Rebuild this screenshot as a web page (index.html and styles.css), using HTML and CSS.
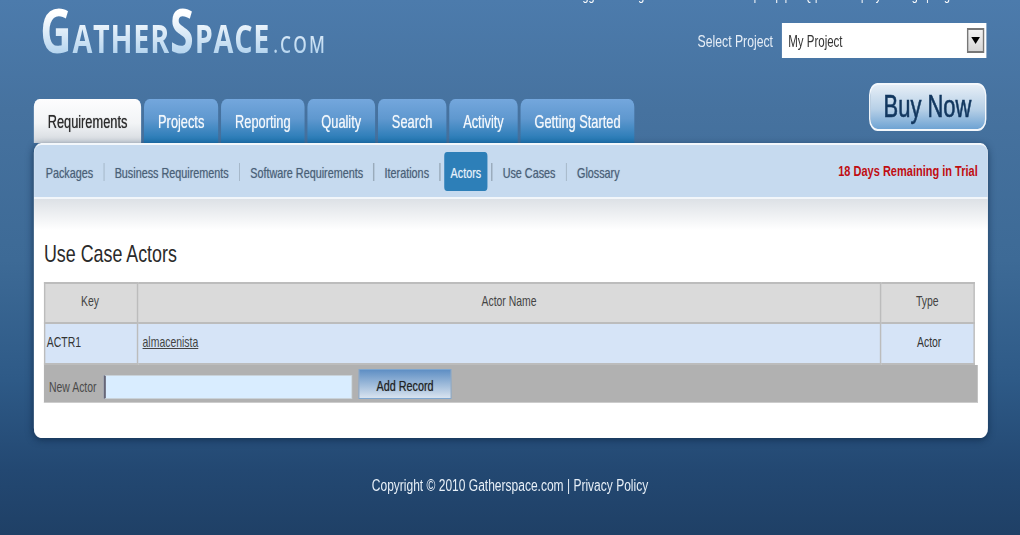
FILE: index.html
```html
<!DOCTYPE html>
<html lang="en">
<head>
<meta charset="utf-8">
<title>GatherSpace - Use Case Actors</title>
<link rel="stylesheet" href="styles.css">
</head>
<body>
<div class="page">
  <div class="toplinks">Logged in as: guest &nbsp; Welcome Guest | Help | FAQ | Contact | My Settings | Log Out</div>
  <header class="brand-row">
    <div class="logo"><span class="cap">G</span>ATHER<span class="cap">S</span>PACE<span class="dotcom">.COM</span></div>
    <div class="project">
      <span class="project-label">Select Project</span>
      <div class="select">
        <span>My Project</span>
        <span class="select-btn"><i class="select-arrow"></i></span>
      </div>
    </div>
  </header>
  <div class="nav-row">
    <nav class="tabs">
      <a class="tab active">Requirements</a>
      <a class="tab">Projects</a>
      <a class="tab">Reporting</a>
      <a class="tab">Quality</a>
      <a class="tab">Search</a>
      <a class="tab">Activity</a>
      <a class="tab">Getting Started</a>
    </nav>
    <a class="buy">Buy Now</a>
  </div>
  <section class="card">
    <div class="subnav">
      <div class="sublinks">
        <a class="sub">Packages</a><i class="sep"></i>
        <a class="sub">Business Requirements</a><i class="sep"></i>
        <a class="sub">Software Requirements</a><i class="sep"></i>
        <a class="sub">Iterations</a><i class="sep"></i>
        <a class="sub current">Actors</a><i class="sep"></i>
        <a class="sub">Use Cases</a><i class="sep"></i>
        <a class="sub">Glossary</a>
      </div>
      <div class="trial">18 Days Remaining in Trial</div>
    </div>
    <div class="content">
      <h1 class="title">Use Case Actors</h1>
      <table class="grid">
        <thead>
          <tr><th class="col-key">Key</th><th>Actor Name</th><th class="col-type">Type</th></tr>
        </thead>
        <tbody>
          <tr><td>ACTR1</td><td><a class="actor-link">almacenista</a></td><td class="center">Actor</td></tr>
        </tbody>
      </table>
      <div class="addbar">
        <label class="add-label">New Actor</label>
        <div class="add-input"></div>
        <button class="add-btn">Add Record</button>
      </div>
    </div>
  </section>
  <footer class="footer">Copyright © 2010 Gatherspace.com | Privacy Policy</footer>
</div>
</body>
</html>
```

FILE: styles.css
```css
html, body {
  margin: 0;
  height: 100%;
  overflow: hidden;
}
body {
  background: linear-gradient(#4c7bac 0, #46729f 110px, #3d6a96 260px, #2e5a87 380px, #234872 470px, #1f4066 535px);
  font-family: "Liberation Sans", Arial, sans-serif;
  font-size: 15px;
  color: #333;
}
.page {
  display: flex;
  flex-direction: column;
  width: 1416.67px;
  height: 535px;
  transform: scaleX(0.72);
  transform-origin: 0 0;
}
.toplinks {
  flex: none;
  height: 18px;
  margin-top: -14px;
  padding-right: 69px;
  line-height: 18px;
  text-align: right;
  color: #fff;
  font-size: 15px;
}
.brand-row {
  flex: none;
  height: 79px;
  display: flex;
  justify-content: space-between;
  align-items: flex-start;
  padding: 0 47px 0 56px;
}
.logo {
  height: 66px;
  line-height: 66px;
  margin-top: -7px;
  font-family: "Open Sans", sans-serif;
  font-weight: 700;
  font-size: 40px;
  letter-spacing: 1.1px;
  background: linear-gradient(#fff 25%, #b6d5ef 85%);
  -webkit-background-clip: text;
  background-clip: text;
  color: transparent;
  white-space: nowrap;
}
.cap { font-size: 60px; }
.dotcom { font-size: 24px; letter-spacing: 3px; margin-left: 4px; font-weight: 600; }
.project {
  display: flex;
  align-items: center;
  gap: 12px;
  margin-top: 19px;
}
.project-label {
  font-size: 17px;
  color: #e6eef7;
  padding-top: 2px;
}
.select {
  width: 284px;
  height: 35px;
  box-sizing: border-box;
  display: flex;
  align-items: center;
  justify-content: space-between;
  padding: 0 3px 0 9px;
  background: #fff;
  font-size: 16px;
  color: #333;
}
.select > span:first-child { padding-top: 2px; }
.select-btn {
  display: flex;
  align-items: center;
  justify-content: center;
  width: 24px;
  height: 25px;
  box-sizing: border-box;
  border: 2px solid #777;
  background: linear-gradient(#f2f2f2, #d6d6d6);
}
.select-arrow {
  width: 0;
  height: 0;
  border-left: 6px solid transparent;
  border-right: 6px solid transparent;
  border-top: 7px solid #000;
}
.nav-row {
  flex: none;
  height: 60px;
  display: flex;
  justify-content: space-between;
  align-items: flex-end;
  padding: 0 47px;
}
.tabs {
  display: flex;
  gap: 4.3px;
}
.tab {
  height: 44px;
  padding: 0 19.2px;
  line-height: 47px;
  font-size: 17.8px;
  color: #f2f7fc;
  border-radius: 8px 8px 0 0;
  background: linear-gradient(#74a7dd, #5f98cf 45%, #1f76b2);
  text-shadow: 0 0 1px rgba(255, 255, 255, .7);
  white-space: nowrap;
}
.tab.active {
  color: #2b2b2b;
  background: linear-gradient(#fdfdfe, #f2f4f6 55%, #d3d8de);
  text-shadow: 0 0 1px rgba(0, 0, 0, .6);
}
.buy {
  align-self: flex-start;
  width: 163px;
  height: 48px;
  box-sizing: border-box;
  border: 2px solid #f4f8fc;
  border-radius: 12px;
  background: linear-gradient(#e6eef6, #b7d0e7 55%, #6ea3d3);
  text-align: center;
  line-height: 43px;
  font-size: 30.5px;
  -webkit-text-stroke: 0.6px #12375f;
  color: #12375f;
}
.card {
  flex: none;
  width: 1325px;
  height: 295px;
  box-sizing: border-box;
  margin-left: 47px;
  border-top: 2px solid #f3f7fb;
  border-radius: 10px;
  background: #fff;
  box-shadow: 0 2px 9px rgba(10, 35, 65, .65);
  overflow: hidden;
}
.subnav {
  height: 52px;
  display: flex;
  align-items: center;
  justify-content: space-between;
  padding: 0 14px 0 8px;
  background: #c6daef;
  border-bottom: 2px solid #f2f6fa;
}
.sublinks {
  display: flex;
  align-items: center;
  gap: 5.7px;
}
.sub {
  padding: 0 8.5px;
  height: 39px;
  line-height: 42px;
  font-size: 15px;
  color: #4a6078;
  border-radius: 4px;
  white-space: nowrap;
  text-shadow: 0 0 1px rgba(74, 96, 120, .5);
}
.sub.current {
  background: #2d7fb8;
  color: #e8f2fa;
  text-shadow: 0 0 1px rgba(232, 242, 250, .5);
}
.sep {
  width: 1.5px;
  height: 18px;
  margin-top: 1px;
  background: #9aabbb;
}
.trial {
  font-size: 15.3px;
  font-weight: 700;
  color: #c00d12;
}
.content {
  height: 239px;
  box-sizing: border-box;
  padding: 40px 0 36px 14px;
  background: linear-gradient(#dde1e6, #fff 31px);
}
.title {
  margin: 0 0 13px;
  font-weight: 400;
  font-size: 24.8px;
  line-height: 30px;
  color: #2a2a2a;
}
.grid {
  width: 1293px;
  height: 82px;
  border-collapse: collapse;
  table-layout: fixed;
  font-size: 14.5px;
}
.grid th, .grid td {
  border: 2px solid #bcbcbc;
  padding: 0 4px;
}
.grid th {
  height: 34px;
  padding-bottom: 4px;
  background: #dadada;
  font-weight: 400;
  color: #444;
  text-align: center;
}
.grid td {
  height: 36px;
  padding-bottom: 3px;
  background: #d6e4f7;
  color: #333;
}
.grid th.col-key { width: 116px; padding-right: 7px; }
.col-type { width: 120px; }
.center { text-align: center; }
.grid td.center { padding-left: 9px; }
.grid td:nth-child(2) { padding-left: 6px; }
.grid td:first-child { padding-left: 2px; }
.actor-link {
  color: #444;
  text-decoration: underline;
}
.addbar {
  width: 1297px;
  height: 38px;
  display: flex;
  align-items: center;
  box-sizing: border-box;
  padding: 0 0 0 7px;
  background: #b1b1b1;
  border-bottom: 1px solid #ccc;
}
.add-label {
  width: 76px;
  font-size: 14.5px;
  color: #4a4a4a;
  margin-top: 7px;
}
.add-input {
  width: 345px;
  height: 24px;
  box-sizing: border-box;
  margin-top: 7px;
  background: #d9edff;
  border: 1px solid #c9d2d9;
  border-left: 3px solid #667;
}
.add-btn {
  width: 129px;
  height: 30px;
  margin: 1px 0 0 9px;
  box-sizing: border-box;
  padding: 3px 0 0;
  border: 1px solid #7ea6cf;
  background: linear-gradient(#5f8fc4, #d8e3ef);
  font-family: inherit;
  font-size: 15px;
  color: #222;
  text-shadow: 0 0 1px rgba(0, 0, 0, .4);
}
.footer {
  flex: none;
  margin-top: 38px;
  line-height: 20px;
  text-align: center;
  font-size: 16.7px;
  color: #e8f0f8;
}
```
